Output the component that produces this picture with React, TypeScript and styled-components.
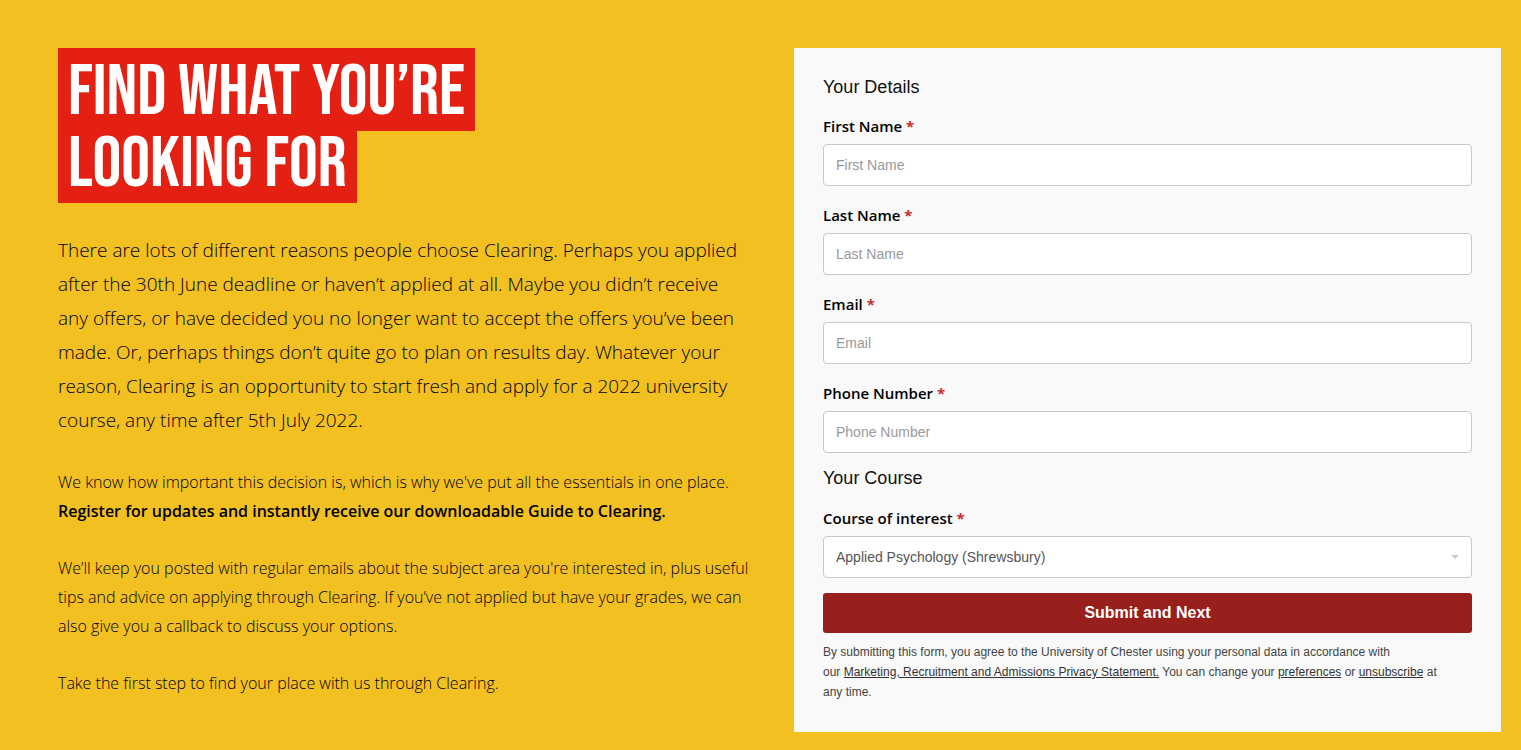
import React from 'react';
import styled, { createGlobalStyle } from 'styled-components';

const GlobalStyle = createGlobalStyle`
  *, *::before, *::after { box-sizing: border-box; }
  body {
    margin: 0;
    background: #f3c022;
    color: #000;
    font-family: "Open Sans", sans-serif;
  }
`;

const Page = styled.main`
  display: grid;
  grid-template-columns: minmax(0, 1fr) minmax(0, 1fr);
  align-items: start;
  gap: 29px;
  padding: 48px 20px 18px 58px;

  @media (max-width: 900px) {
    grid-template-columns: minmax(0, 1fr);
    padding: 24px;
  }
`;

const Intro = styled.section`
  padding-right: 12px;
`;

const Title = styled.h1`
  display: flex;
  flex-direction: column;
  align-items: flex-start;
  margin: 0 0 30px;
  font: 400 72px/72px "Bebas Neue", "Open Sans Condensed", "Roboto", sans-serif;
  color: #fff;
`;

const TitleLine = styled.span`
  padding: 9px 10px 2px;
  background: #e42013;
  white-space: nowrap;

  & + & {
    margin-top: -11px;
  }
`;

const Lead = styled.p`
  margin: 0 0 31px;
  font-size: 19px;
  font-weight: 300;
  line-height: 34px;
`;

const Copy = styled.p`
  margin: 0 0 28px;
  font-size: 16px;
  font-weight: 300;
  line-height: 29px;

  &:last-child {
    margin-bottom: 0;
  }
`;

const Strong = styled.strong`
  display: block;
  font-weight: 600;
`;

const Panel = styled.form`
  padding: 29px 29px 30px;
  background: #f9f9f9;
  font-family: "Liberation Sans", Arial, sans-serif;
`;

const Group = styled.fieldset`
  display: flex;
  flex-direction: column;
  gap: 19px;
  min-width: 0;
  margin: 0 0 15px;
  padding: 0;
  border: 0;

  & + & {
    gap: 20px;
  }
`;

const GroupTitle = styled.h2`
  margin: 0;
  font-size: 18px;
  font-weight: 400;
  line-height: 20px;
  color: #111;
`;

const Field = styled.div`
  display: flex;
  flex-direction: column;
  gap: 8px;
`;

const Label = styled.label`
  font-family: "Open Sans", sans-serif;
  font-size: 15px;
  font-weight: 600;
  line-height: 20px;
`;

const Required = styled.span`
  color: #cc2a2a;
  font-weight: 700;
`;

const Input = styled.input`
  width: 100%;
  height: 42px;
  padding: 0 12px;
  border: 1px solid #c8c8c8;
  border-radius: 4px;
  background: #fff;
  color: #555;
  font: 14px "Liberation Sans", Arial, sans-serif;

  &::placeholder {
    color: #999;
    opacity: 1;
  }
`;

const SelectWrap = styled.div`
  position: relative;
`;

const Select = styled.select`
  display: block;
  width: 100%;
  height: 42px;
  padding: 0 32px 0 12px;
  border: 1px solid #c8c8c8;
  border-radius: 4px;
  appearance: none;
  background: #fff;
  color: #555;
  font: 14px "Liberation Sans", Arial, sans-serif;
`;

const Caret = styled.svg`
  position: absolute;
  top: 19px;
  right: 13px;
  pointer-events: none;
`;

const Submit = styled.button`
  display: block;
  width: 100%;
  height: 40px;
  padding: 0;
  border: 0;
  border-radius: 3px;
  background: #97201d;
  color: #fff;
  font: 700 16px "Liberation Sans", Arial, sans-serif;
  cursor: pointer;
`;

const Notice = styled.p`
  margin: 9px 0 0;
  padding-right: 24px;
  font-size: 12px;
  line-height: 20px;
  color: #444;
`;

const NoticeLink = styled.a`
  color: #333;
`;

const fields = [
  { id: 'first-name', label: 'First Name', type: 'text' },
  { id: 'last-name', label: 'Last Name', type: 'text' },
  { id: 'email', label: 'Email', type: 'email' },
  { id: 'phone', label: 'Phone Number', type: 'tel' },
];

export default function App() {
  return (
    <>
      <GlobalStyle />
      <Page>
        <Intro>
          <Title>
            <TitleLine>FIND WHAT YOU’RE</TitleLine>
            <TitleLine>LOOKING FOR</TitleLine>
          </Title>
          <Lead>
            There are lots of different reasons people choose Clearing. Perhaps you applied after the
            30th June deadline or haven’t applied at all. Maybe you didn’t receive any offers, or have
            decided you no longer want to accept the offers you’ve been made. Or, perhaps things don’t
            quite go to plan on results day. Whatever your reason, Clearing is an opportunity to start
            fresh and apply for a 2022 university course, any time after 5th July 2022.
          </Lead>
          <Copy>
            We know how important this decision is, which is why we've put all the essentials in one
            place.{' '}
            <Strong>
              Register for updates and instantly receive our downloadable Guide to Clearing.
            </Strong>
          </Copy>
          <Copy>
            We’ll keep you posted with regular emails about the subject area you're interested in, plus
            useful tips and advice on applying through Clearing. If you’ve not applied but have your
            grades, we can also give you a callback to discuss your options.
          </Copy>
          <Copy>Take the first step to find your place with us through Clearing.</Copy>
        </Intro>

        <Panel onSubmit={(event) => event.preventDefault()}>
          <Group>
            <GroupTitle>Your Details</GroupTitle>
            {fields.map((field) => (
              <Field key={field.id}>
                <Label htmlFor={field.id}>
                  {field.label} <Required>*</Required>
                </Label>
                <Input id={field.id} type={field.type} placeholder={field.label} />
              </Field>
            ))}
          </Group>
          <Group>
            <GroupTitle>Your Course</GroupTitle>
            <Field>
              <Label htmlFor="course">
                Course of interest <Required>*</Required>
              </Label>
              <SelectWrap>
                <Select id="course" defaultValue="applied-psychology">
                  <option value="applied-psychology">Applied Psychology (Shrewsbury)</option>
                </Select>
                <Caret width="8" height="4" viewBox="0 0 8 4" aria-hidden="true">
                  <path d="M0 0h8L4 4z" fill="#c9c6d6" />
                </Caret>
              </SelectWrap>
            </Field>
          </Group>
          <Submit type="submit">Submit and Next</Submit>
          <Notice>
            By submitting this form, you agree to the University of Chester using your personal data in
            accordance with our{'\u00a0'}
            <NoticeLink href="#privacy">
              Marketing, Recruitment and Admissions Privacy Statement.
            </NoticeLink>{' '}
            You can change your <NoticeLink href="#preferences">preferences</NoticeLink> or{' '}
            <NoticeLink href="#unsubscribe">unsubscribe</NoticeLink> at any time.
          </Notice>
        </Panel>
      </Page>
    </>
  );
}
